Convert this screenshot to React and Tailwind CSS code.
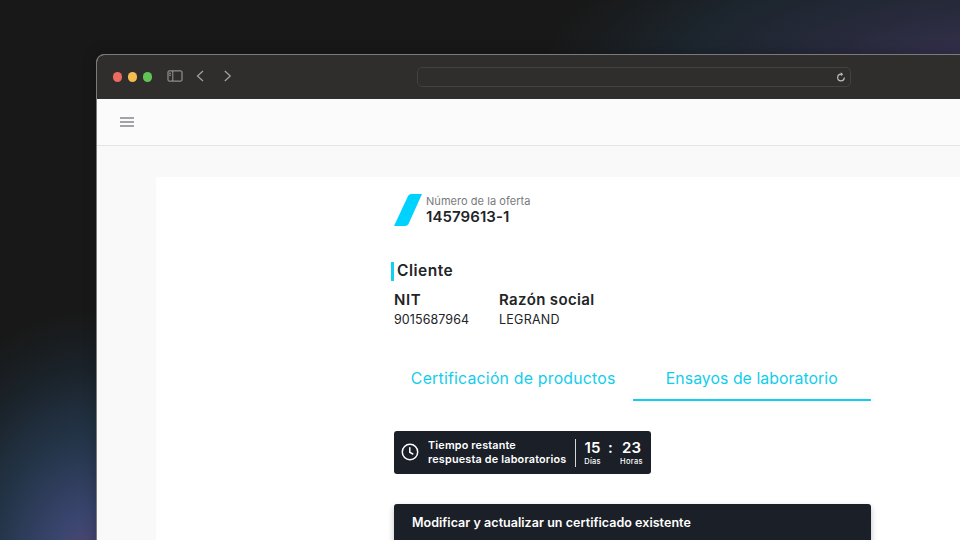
import React from "react";

function Toolbar() {
  return (
    <div className="flex h-[43.500px] shrink-0 items-center bg-[#2f2e2c] pl-[15.500px] text-[#a5a4a3]">
      <div className="flex gap-[5.500px]">
        <span className="size-[9.500px] rounded-full bg-[#ec6a5f]" />
        <span className="size-[9.500px] rounded-full bg-[#f4bd50]" />
        <span className="size-[9.500px] rounded-full bg-[#5fc454]" />
      </div>
      <svg className="mb-px ml-[14.500px]" width="16" height="12" viewBox="0 0 16 12" fill="none" stroke="currentColor">
        <rect x="1" y="0.900" width="14" height="10.200" rx="1" />
        <path d="M5.800 1v10M2 3.200h2M2 5.200h2" strokeWidth="0.900" />
      </svg>
      <svg className="mb-px ml-[13px]" width="9" height="12" viewBox="0 0 9 12" fill="none" stroke="currentColor" strokeWidth="1.200">
        <path d="M7 1 1.500 6l5.500 5" />
      </svg>
      <svg className="mb-px ml-[18px]" width="9" height="12" viewBox="0 0 9 12" fill="none" stroke="currentColor" strokeWidth="1.200">
        <path d="M1.800 1 7.300 6l-5.500 5" />
      </svg>
      <div className="ml-[185.500px] flex h-5 w-[434px] items-center justify-end rounded-[5px] border border-[#434241] pr-1">
        <svg width="10" height="10" viewBox="0 0 10 10" fill="none" stroke="#bdbcbb" strokeWidth="1.200">
          <path d="M5 2.200A3.300 3.300 0 1 0 8.300 5.500" />
          <path d="M4.800 0.200 7.200 2.200 4.800 4.200Z" fill="#bdbcbb" stroke="none" />
        </svg>
      </div>
    </div>
  );
}

function Field({ label, value, labelClass, valueClass }) {
  return (
    <div>
      <div className={"text-[15px] leading-5 font-semibold " + labelClass}>{label}</div>
      <div className={"text-[12.5px] leading-[20px] " + valueClass}>{value}</div>
    </div>
  );
}

function Timer() {
  return (
    <div className="mt-[30px] flex h-[43px] w-[257px] items-center rounded-[3px] bg-[#1b1f27] pl-[7px] text-white">
      <svg className="mb-px" width="18" height="18" viewBox="0 0 18 18" fill="none" stroke="currentColor" strokeWidth="1.500" strokeLinecap="round">
        <circle cx="9" cy="9" r="7.700" />
        <path d="M8.800 4.700v4.600l3 1.700" />
      </svg>
      <div className="ml-[9px] w-[147px] text-[10.800px] leading-[13.500px] font-semibold whitespace-nowrap">
        <div className="tracking-[0.180px]">Tiempo restante</div>
        <div className="tracking-[0.200px]">respuesta de laboratorios</div>
      </div>
      <div className="h-[28px] w-px bg-[#d5d6d8]" />
      <div className="ml-[7px] flex pt-px">
        <div className="w-[19px] text-center">
          <div className="text-[15px] leading-[17px] font-semibold">15</div>
          <div className="text-[7.500px] leading-[11px] font-medium tracking-[0.200px]">Días</div>
        </div>
        <div className="w-[17px] text-center text-[15px] leading-[17px] font-semibold">:</div>
        <div className="w-[25px] text-center">
          <div className="text-[15px] leading-[17px] font-semibold">23</div>
          <div className="text-[7.500px] leading-[11px] font-medium tracking-[0.300px]">Horas</div>
        </div>
      </div>
    </div>
  );
}

export default function App() {
  return (
    <div className="h-[540px] w-[960px] overflow-hidden bg-[#181818] bg-[radial-gradient(ellipse_460px_170px_at_1000px_75px,#3a3355_0%,#272a3b_40%,#1c252d_70%,transparent_100%),radial-gradient(ellipse_190px_260px_at_90px_570px,#5a4570_0%,#3b4670_20%,#243549_50%,#1a2229_78%,transparent_100%)] pt-[54px] pl-[96px] font-['Inter','Liberation_Sans',sans-serif] text-[#222427]">
      <div className="flex h-[520px] w-[1000px] flex-col overflow-hidden rounded-tl-[8px] border border-[#7b7b7b] bg-[#f9f9fa] shadow-[0_0_14px_rgba(0,0,0,0.250)]">
        <Toolbar />
        <div className="flex h-[47.500px] shrink-0 items-center border-b border-[#e4e4e6] bg-[#fbfbfc] pt-px pl-[23px]">
          <svg width="14" height="10" viewBox="0 0 14 10" stroke="#85878c" strokeWidth="1.300">
            <path d="M0 1h14M0 5h14M0 9h14" />
          </svg>
        </div>
        <div className="mt-[31px] ml-[59px] flex-1 rounded-tl-[2px] bg-white pt-[17px] pl-[238px]">
          <div className="flex h-8">
            <svg width="28" height="32" viewBox="0 0 28 32">
              <path d="M14 2Q15 0 17.500 0H28L14.500 30Q13.500 32 11 32H0Z" fill="#00d2ff" />
            </svg>
            <div className="ml-1">
              <div className="text-[11px] leading-[14px] tracking-[0.050px] text-[#77797d]">Número de la oferta</div>
              <div className="text-[15px] leading-[17px] font-semibold tracking-[0.080px]">14579613-1</div>
            </div>
          </div>
          <div className="mt-9 -ml-[3px] h-[19px] border-l-[3px] border-[#14d0ee] pl-[3px] text-[15.500px] leading-[18px] font-semibold tracking-[0.500px]">Cliente</div>
          <div className="mt-[9px] flex">
            <div className="w-[105px]">
              <Field label="NIT" value="9015687964" labelClass="tracking-[0.600px]" valueClass="tracking-[0.080px]" />
            </div>
            <Field label="Razón social" value="LEGRAND" labelClass="tracking-[0.370px]" valueClass="tracking-[0.250px]" />
          </div>
          <div className="mt-[27px] grid w-[477px] grid-cols-2 text-center text-[15.800px] leading-[43px] text-[#12cdeb]">
            <div className="h-11 tracking-[0.230px]">Certificación de productos</div>
            <div className="h-11 border-b-2 border-[#12cdeb] tracking-[0.060px]">Ensayos de laboratorio</div>
          </div>
          <Timer />
          <div className="mt-[30px] h-[60px] w-[477px] rounded-[3px] bg-[#1b1f27] pl-[18px] text-[12.500px] leading-[37px] font-semibold tracking-[0.040px] text-white shadow-[0_3px_6px_rgba(0,0,0,0.250)]">
            Modificar y actualizar un certificado existente
          </div>
        </div>
      </div>
    </div>
  );
}
